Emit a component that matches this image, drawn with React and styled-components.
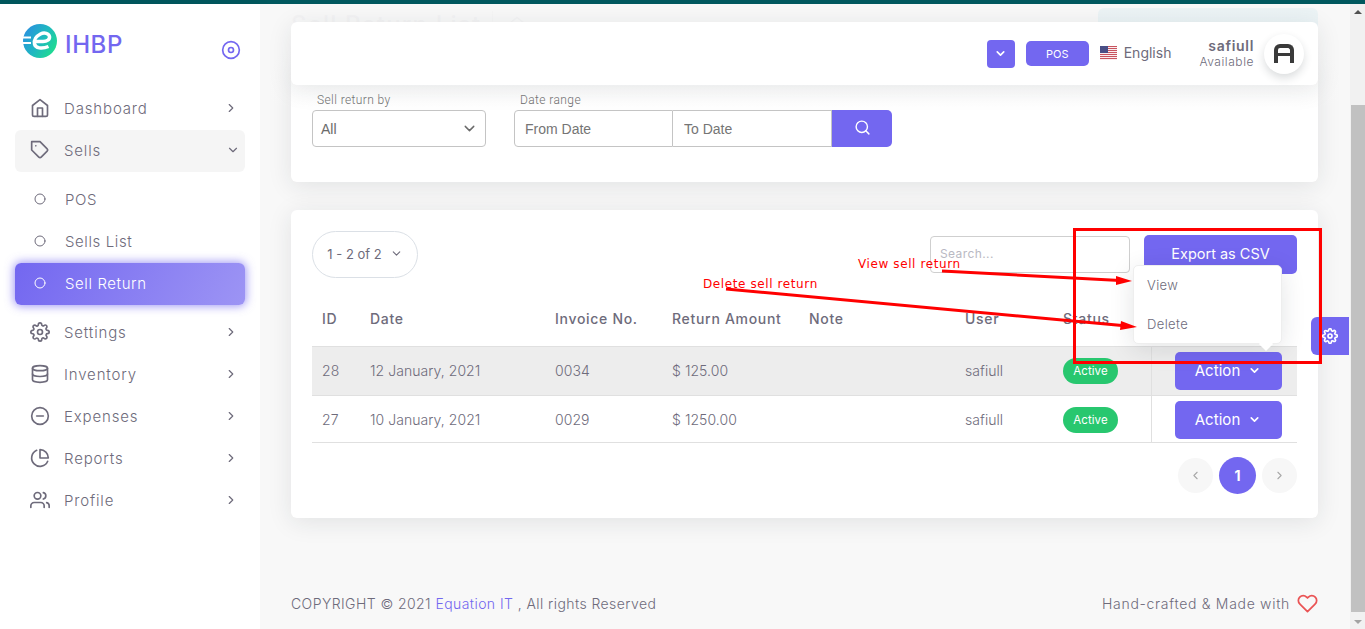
import React from 'react';
import styled, { createGlobalStyle } from 'styled-components';
import {
  FiHome, FiTag, FiSettings, FiDatabase, FiMinusCircle, FiPieChart, FiUsers,
  FiChevronRight, FiChevronDown, FiChevronLeft, FiDisc, FiSearch, FiHeart, FiCircle,
} from 'react-icons/fi';

const purple = '#7367f0';
const text = '#6e6b7b';

const GlobalStyle = createGlobalStyle`
  html, body { margin: 0; height: 100%; overflow: hidden; }
  body { font-family: Inter, "Open Sans", sans-serif; color: ${text}; background: #f8f8f8; }
  * { box-sizing: border-box; }
`;

const Page = styled.div`
  position: relative;
  height: 629px;
  display: flex;
  flex-direction: column;
`;

const TopBar = styled.div`
  height: 4px;
  flex: none;
  background: #00585e;
`;

const Body = styled.div`
  flex: 1;
  display: flex;
  min-height: 0;
`;

const Sidebar = styled.aside`
  width: 260px;
  flex: none;
  background: #fff;
  box-shadow: 0 0 15px rgba(34, 41, 47, 0.05);
`;

const Brand = styled.div`
  height: 84px;
  display: flex;
  align-items: flex-start;
  padding: 20px 19px 0 23px;
`;

const BrandName = styled.span`
  margin: 6px 0 0 8px;
  font-size: 24px;
  line-height: 29px;
  font-weight: 500;
  color: ${purple};
  letter-spacing: 0.6px;
`;

const Toggle = styled.span`
  margin: 16px 0 0 auto;
  color: ${purple};
  font-size: 20px;
  line-height: 0;
`;

const Menu = styled.nav`
  display: flex;
  flex-direction: column;
  padding: 0 15px;
`;

const SubMenu = styled.div`
  display: flex;
  flex-direction: column;
  padding: 7px 0;
`;

const MenuItem = styled.div`
  height: 42px;
  display: flex;
  align-items: center;
  padding: 0 7px 2px ${(p) => (p.$sub ? '19px' : '15px')};
  border-radius: 6px;
  font-size: 15px;
  font-weight: 300;
  letter-spacing: ${(p) => (p.$sub ? '0.6px' : '0.85px')};
  color: ${(p) => (p.$active ? '#fff' : text)};
  background: ${(p) => (p.$open ? '#f5f5f5' : p.$active ? 'linear-gradient(118deg, #7367f0, rgba(115, 103, 240, 0.7))' : 'transparent')};
  box-shadow: ${(p) => (p.$active ? '0 0 10px 1px rgba(115, 103, 240, 0.7)' : 'none')};
`;

const MenuIcon = styled.span`
  width: 34px;
  flex: none;
  font-size: 20px;
  line-height: 0;
`;

const SubIcon = styled.span`
  width: 31px;
  flex: none;
  font-size: 12px;
  line-height: 0;
`;

const MenuCaret = styled.span`
  margin-left: auto;
  margin-right: ${(p) => (p.$down ? '-2px' : '0')};
  font-size: 14px;
  line-height: 0;
`;

const Main = styled.main`
  position: relative;
  flex: 1;
  min-width: 0;
  display: flex;
  flex-direction: column;
  padding: 0 32px 0 31px;
  background: #f8f8f8;
`;

const TitleRow = styled.div`
  height: 56px;
  flex: none;
  display: flex;
  align-items: flex-start;
`;

const PageTitle = styled.h2`
  margin: 7px 0 0;
  width: 202px;
  height: 32px;
  border-right: 1px solid #ddd;
  font-size: 24px;
  line-height: 28px;
  font-weight: 500;
  letter-spacing: 1.2px;
  color: #c4c2cc;
`;

const Crumb = styled.span`
  margin: 12px 0 0 15px;
  color: #c4c2cc;
  font-size: 18px;
  line-height: 0;
`;

const AddButton = styled.div`
  width: 220px;
  height: 34px;
  margin: 4px 0 0 auto;
  border-radius: 6px;
  background: #76c6da;
`;

const NavFade = styled.div`
  position: absolute;
  top: 0;
  left: 0;
  right: 0;
  height: 104px;
  background: linear-gradient(180deg, rgba(248, 248, 248, 0.9) 44%, rgba(248, 248, 248, 0.43) 73%, rgba(248, 248, 248, 0));
  pointer-events: none;
`;

const Navbar = styled.header`
  position: absolute;
  top: 18px;
  left: 31px;
  right: 32px;
  height: 63px;
  display: flex;
  align-items: center;
  justify-content: flex-end;
  padding-right: 14px;
  background: #fff;
  border-radius: 6px;
  box-shadow: 0 4px 24px rgba(34, 41, 47, 0.1);
`;

const NavChevron = styled.div`
  width: 28px;
  height: 28px;
  display: flex;
  align-items: center;
  justify-content: center;
  border-radius: 4px;
  background: ${purple};
  color: #fff;
`;

const PosButton = styled.div`
  width: 63px;
  height: 25px;
  margin: 0 11px;
  display: flex;
  align-items: center;
  justify-content: center;
  border-radius: 5px;
  background: ${purple};
  color: #fff;
  font-size: 11px;
`;

const Lang = styled.div`
  display: flex;
  align-items: center;
  gap: 7px;
  padding-bottom: 2px;
  font-size: 14px;
`;

const UserBox = styled.div`
  margin: -1px 10px 0 28px;
  text-align: right;
`;

const UserName = styled.div`
  margin-bottom: 2px;
  font-size: 14px;
  line-height: 15px;
  font-weight: 600;
  letter-spacing: 0.7px;
`;

const UserState = styled.div`
  font-size: 12px;
  line-height: 14px;
  font-weight: 300;
  letter-spacing: 0.55px;
`;

const Avatar = styled.div`
  width: 40px;
  height: 40px;
  display: flex;
  align-items: center;
  justify-content: center;
  border-radius: 50%;
  background: #fff;
  box-shadow: 0 4px 8px rgba(34, 41, 47, 0.16);
`;

const AvatarMark = styled.div`
  position: relative;
  width: 20px;
  height: 19px;
  border: 4px solid #3a3a3a;
  border-bottom: 0;
  border-radius: 6px 6px 0 0;
  &::after {
    content: '';
    position: absolute;
    left: 0;
    right: 0;
    top: 5px;
    height: 3px;
    background: #3a3a3a;
  }
`;

const Card = styled.section`
  flex: none;
  background: #fff;
  border-radius: 6px;
  box-shadow: 0 4px 24px rgba(34, 41, 47, 0.1);
`;

const FilterCard = styled(Card)`
  height: 122px;
  padding: 32px 21px 0;
  display: flex;
  gap: 28px;
`;

const Field = styled.div`
  display: flex;
  flex-direction: column;
`;

const FieldLabel = styled.label`
  height: 18px;
  padding-left: ${(p) => p.$pad || '5px'};
  font-family: Roboto, sans-serif;
  font-size: 12px;
  line-height: 16px;
  font-weight: 300;
  letter-spacing: 0.4px;
  color: #5e5e5e;
`;

const SelectBox = styled.div`
  width: 174px;
  height: 37px;
  display: flex;
  align-items: center;
  justify-content: space-between;
  padding: 0 7px 0 8px;
  border: 1px solid #c4c4c4;
  border-radius: 4px;
  font-family: "Liberation Sans", sans-serif;
  font-size: 14px;
  font-weight: 400;
  color: #6a6a6a;
`;

const RangeGroup = styled.div`
  display: flex;
  height: 37px;
`;

const DateInput = styled.input`
  width: ${(p) => p.$w};
  height: 37px;
  padding: 0 10px 0 ${(p) => (p.$first ? '10px' : '11px')};
  border: 1px solid #c4c4c4;
  border-left-width: ${(p) => (p.$first ? '1px' : '0')};
  border-radius: ${(p) => (p.$first ? '4px 0 0 4px' : '0')};
  font-family: "Liberation Sans", sans-serif;
  font-size: 14px;
  outline: none;
  &::placeholder { color: #757575; opacity: 1; }
`;

const SearchBtn = styled.div`
  width: 60px;
  display: flex;
  align-items: center;
  justify-content: center;
  padding-bottom: 2px;
  border-radius: 0 5px 5px 0;
  background: ${purple};
  color: #fff;
  font-size: 17px;
`;

const TableCard = styled(Card)`
  height: 308px;
  margin-top: 28px;
  padding: 21px 21px 0;
`;

const Toolbar = styled.div`
  height: 47px;
  display: flex;
  align-items: center;
`;

const PagePill = styled.div`
  width: 106px;
  height: 47px;
  display: flex;
  align-items: center;
  justify-content: center;
  gap: 8px;
  padding-bottom: 2px;
  border: 1px solid #dbe0e6;
  border-radius: 24px;
  font-size: 13px;
`;

const SearchInput = styled.input`
  width: 200px;
  height: 37px;
  margin-left: auto;
  padding: 0 9px 2px;
  border: 1px solid #cfcfcf;
  border-radius: 4px;
  font-family: Inter, sans-serif;
  font-size: 12px;
  letter-spacing: 0.4px;
  outline: none;
  &::placeholder { color: #b9b9c3; opacity: 1; }
`;

const ExportButton = styled.div`
  width: 153px;
  height: 39px;
  margin-left: 14px;
  display: flex;
  align-items: center;
  justify-content: center;
  padding-bottom: 2px;
  border-radius: 5px;
  background: ${purple};
  color: #fff;
  font-size: 14.5px;
`;

const Table = styled.table`
  width: 985px;
  margin-top: 12px;
  border-collapse: collapse;
  table-layout: fixed;
`;

const Th = styled.th`
  height: 56px;
  padding: 2px 10px 0;
  border-bottom: 1px solid #e0e0e0;
  text-align: left;
  font-size: 14px;
  font-weight: 500;
  letter-spacing: 0.7px;
  color: ${text};
`;

const Row = styled.tr`
  background: ${(p) => (p.$hover ? '#ededed' : 'transparent')};
`;

const Td = styled.td`
  height: ${(p) => p.$h};
  padding: ${(p) => p.$pt} 10px 0;
  border-bottom: 1px solid #e0e0e0;
  font-size: 14px;
  font-weight: 300;
  letter-spacing: 0.05px;
`;

const ActionCell = styled(Td)`
  border-left: 1px solid #e0e0e0;
  padding-left: 23px;
  padding-right: 15px;
`;

const Badge = styled.span`
  width: 55px;
  height: 26px;
  display: inline-flex;
  align-items: center;
  justify-content: center;
  border-radius: 13px;
  background: #28c76f;
  color: #fff;
  font-size: 11.5px;
  font-weight: 400;
  vertical-align: middle;
`;

const ActionButton = styled.div`
  width: 107px;
  height: 38px;
  display: flex;
  align-items: center;
  justify-content: center;
  gap: 8px;
  border-radius: 5px;
  background: ${purple};
  color: #fff;
  font-size: 15px;
  font-weight: 400;
`;

const Pager = styled.div`
  margin-top: 14px;
  display: flex;
  align-items: center;
  justify-content: flex-end;
  gap: 6px;
`;

const PageArrow = styled.div`
  width: 35px;
  height: 35px;
  display: flex;
  align-items: center;
  justify-content: center;
  border-radius: 50%;
  background: #f7f7f7;
  color: #a8a8a8;
  font-size: 13px;
`;

const PageCurrent = styled.div`
  width: 37px;
  height: 37px;
  display: flex;
  align-items: center;
  justify-content: center;
  border-radius: 50%;
  background: ${purple};
  color: #fff;
  font-size: 14px;
  font-weight: 700;
`;

const Footer = styled.footer`
  margin-top: auto;
  height: 37px;
  display: flex;
  align-items: flex-start;
  justify-content: space-between;
  font-size: 14px;
  font-weight: 300;
  line-height: 24px;
  letter-spacing: 0.43px;
`;

const FooterLink = styled.span`
  color: ${purple};
`;

const FooterNote = styled.span`
  letter-spacing: 0.7px;
`;

const HeartWrap = styled.span`
  display: inline-flex;
  vertical-align: -5px;
  margin-left: 7px;
  color: #ea5455;
  font-size: 21px;
`;

const Scrollbar = styled.div`
  position: relative;
  width: 15px;
  flex: none;
  background: #f1f1f1;
`;

const ScrollThumb = styled.div`
  position: absolute;
  top: 101px;
  left: 1px;
  right: 0;
  height: 507px;
  background: #c1c1c1;
`;

const ScrollArrow = styled.div`
  position: absolute;
  left: 4px;
  width: 0;
  height: 0;
  border-left: 4px solid transparent;
  border-right: 4px solid transparent;
  ${(p) => (p.$down ? 'bottom: 5px; border-top: 4px solid #a3a3a3;' : 'top: 6px; border-bottom: 4px solid #505050;')}
`;

const SettingsTab = styled.div`
  position: absolute;
  top: 317px;
  left: 1311px;
  width: 38px;
  height: 38px;
  display: flex;
  align-items: center;
  justify-content: center;
  border-radius: 6px 0 0 6px;
  background: ${purple};
  color: #fff;
  font-size: 15px;
`;

const ActionMenu = styled.div`
  position: absolute;
  top: 265px;
  left: 1133px;
  width: 149px;
  height: 79px;
  background: #fff;
  border: 1px solid #eee;
  border-radius: 5px;
  box-shadow: 0 5px 25px rgba(34, 41, 47, 0.12);
  &::after {
    content: '';
    position: absolute;
    right: 10px;
    bottom: -6px;
    width: 10px;
    height: 10px;
    background: #fff;
    transform: rotate(45deg);
  }
`;

const ActionMenuItem = styled.div`
  height: 39px;
  display: flex;
  align-items: center;
  padding: 0 0 2px 13px;
  font-size: 13px;
  font-weight: 300;
  letter-spacing: 0.4px;
`;

const MarkupBox = styled.div`
  position: absolute;
  top: 228px;
  left: 1073px;
  width: 249px;
  height: 136px;
  border: 3px solid #f00;
  pointer-events: none;
`;

const MarkupLines = styled.svg`
  position: absolute;
  top: 0;
  left: 0;
  pointer-events: none;
`;

const MarkupLabel = styled.span`
  position: absolute;
  top: ${(p) => p.$top}px;
  left: ${(p) => p.$left}px;
  font-family: "DejaVu Sans", sans-serif;
  font-size: 12px;
  line-height: 16px;
  letter-spacing: 0.6px;
  color: #f00;
`;

const Logo = () => (
  <svg width="34" height="34" viewBox="0 0 34 34">
    <defs>
      <linearGradient id="logoGrad" x1="0" y1="0.2" x2="1" y2="0.8">
        <stop offset="0" stopColor="#2a8fe0" />
        <stop offset="0.5" stopColor="#1fb8c0" />
        <stop offset="1" stopColor="#1fe08a" />
      </linearGradient>
    </defs>
    <circle cx="17" cy="17" r="17" fill="url(#logoGrad)" />
    <path d="M0 13.5h8M0 19h8" stroke="#fff" strokeWidth="2" />
    <path d="M10 17.5h10c4 0 7-2 6.5-5-.6-3-5-4.5-9-2.5-4 2-7 6-6 10 1 4 7 5.5 14 2.5" fill="none" stroke="#fff" strokeWidth="3.5" />
  </svg>
);

const UsFlag = () => (
  <svg width="17" height="14" viewBox="0 0 17 14">
    <rect width="17" height="14" fill="#fff" />
    {[0, 2, 4, 6, 8, 10, 12].map((y) => (
      <rect key={y} y={y} width="17" height="1.1" fill="#c8545f" />
    ))}
    <rect width="8" height="7" fill="#4a4f86" />
  </svg>
);

const menuBefore = [
  { label: 'Dashboard', icon: FiHome },
];
const subItems = ['POS', 'Sells List', 'Sell Return'];
const menuAfter = [
  { label: 'Settings', icon: FiSettings },
  { label: 'Inventory', icon: FiDatabase },
  { label: 'Expenses', icon: FiMinusCircle },
  { label: 'Reports', icon: FiPieChart },
  { label: 'Profile', icon: FiUsers },
];

const rows = [
  { id: 28, date: '12 January, 2021', invoice: '0034', amount: '$ 125.00', h: '49px', pt: '0', hover: true },
  { id: 27, date: '10 January, 2021', invoice: '0029', amount: '$ 1250.00', h: '47px', pt: '2px' },
];

const NavLine = ({ item }) => (
  <MenuItem>
    <MenuIcon><item.icon /></MenuIcon>
    {item.label}
    <MenuCaret><FiChevronRight /></MenuCaret>
  </MenuItem>
);

const App = () => {
  return (
    <Page>
      <GlobalStyle />
      <TopBar />
      <Body>
        <Sidebar>
          <Brand>
            <Logo />
            <BrandName>IHBP</BrandName>
            <Toggle><FiDisc /></Toggle>
          </Brand>
          <Menu>
            {menuBefore.map((item) => <NavLine key={item.label} item={item} />)}
            <MenuItem $open>
              <MenuIcon><FiTag /></MenuIcon>
              Sells
              <MenuCaret $down><FiChevronDown /></MenuCaret>
            </MenuItem>
            <SubMenu>
              {subItems.map((label) => (
                <MenuItem key={label} $sub $active={label === 'Sell Return'}>
                  <SubIcon><FiCircle /></SubIcon>
                  {label}
                </MenuItem>
              ))}
            </SubMenu>
            {menuAfter.map((item) => <NavLine key={item.label} item={item} />)}
          </Menu>
        </Sidebar>

        <Main>
          <TitleRow>
            <PageTitle>Sell Return List</PageTitle>
            <Crumb><FiHome /></Crumb>
            <AddButton />
          </TitleRow>

          <FilterCard>
            <Field>
              <FieldLabel>Sell return by</FieldLabel>
              <SelectBox>All <FiChevronDown size={17} /></SelectBox>
            </Field>
            <Field>
              <FieldLabel $pad="6px">Date range</FieldLabel>
              <RangeGroup>
                <DateInput $first $w="159px" placeholder="From Date" readOnly />
                <DateInput $w="159px" placeholder="To Date" readOnly />
                <SearchBtn><FiSearch /></SearchBtn>
              </RangeGroup>
            </Field>
          </FilterCard>

          <TableCard>
            <Toolbar>
              <PagePill>1 - 2 of 2 <FiChevronDown size={13} /></PagePill>
              <SearchInput placeholder="Search..." readOnly />
              <ExportButton>Export as CSV</ExportButton>
            </Toolbar>
            <Table>
              <colgroup>
                {[48, 185, 117, 137, 156, 98, 98, 146].map((w, i) => <col key={i} width={w} />)}
              </colgroup>
              <thead>
                <tr>
                  <Th>ID</Th>
                  <Th>Date</Th>
                  <Th>Invoice No.</Th>
                  <Th>Return Amount</Th>
                  <Th>Note</Th>
                  <Th>User</Th>
                  <Th>Status</Th>
                  <Th />
                </tr>
              </thead>
              <tbody>
                {rows.map((r) => (
                  <Row key={r.id} $hover={r.hover}>
                    <Td $h={r.h} $pt={r.pt}>{r.id}</Td>
                    <Td $h={r.h} $pt={r.pt}>{r.date}</Td>
                    <Td $h={r.h} $pt={r.pt}>{r.invoice}</Td>
                    <Td $h={r.h} $pt={r.pt}>{r.amount}</Td>
                    <Td $h={r.h} $pt={r.pt} />
                    <Td $h={r.h} $pt={r.pt}>safiull</Td>
                    <Td $h={r.h} $pt={r.pt}><Badge>Active</Badge></Td>
                    <ActionCell $h={r.h} $pt={r.pt}>
                      <ActionButton>Action <FiChevronDown size={13} strokeWidth={3} /></ActionButton>
                    </ActionCell>
                  </Row>
                ))}
              </tbody>
            </Table>
            <Pager>
              <PageArrow><FiChevronLeft /></PageArrow>
              <PageCurrent>1</PageCurrent>
              <PageArrow><FiChevronRight /></PageArrow>
            </Pager>
          </TableCard>

          <Footer>
            <span>COPYRIGHT © 2021 <FooterLink>Equation IT</FooterLink> , All rights Reserved</span>
            <FooterNote>Hand-crafted &amp; Made with<HeartWrap><FiHeart /></HeartWrap></FooterNote>
          </Footer>

          <NavFade />
          <Navbar>
            <NavChevron><FiChevronDown size={13} strokeWidth={3} /></NavChevron>
            <PosButton>POS</PosButton>
            <Lang><UsFlag /> English</Lang>
            <UserBox>
              <UserName>safiull</UserName>
              <UserState>Available</UserState>
            </UserBox>
            <Avatar><AvatarMark /></Avatar>
          </Navbar>
        </Main>

        <Scrollbar>
          <ScrollArrow />
          <ScrollThumb />
          <ScrollArrow $down />
        </Scrollbar>
      </Body>

      <SettingsTab><FiSettings size={16} strokeWidth={2.5} /></SettingsTab>
      <ActionMenu>
        <ActionMenuItem>View</ActionMenuItem>
        <ActionMenuItem>Delete</ActionMenuItem>
      </ActionMenu>

      <MarkupLines width="1365" height="629" viewBox="0 0 1365 629">
        <path d="M942 271L1120 280.4M726 289L1122 325.6" stroke="#f00" strokeWidth="3" fill="none" />
        <path d="M1132 281L1116 276L1116 285ZM1137 327L1121 321L1120 330Z" fill="#f00" />
      </MarkupLines>
      <MarkupBox />
      <MarkupLabel $top={256} $left={858}>View sell return</MarkupLabel>
      <MarkupLabel $top={276} $left={703}>Delete sell return</MarkupLabel>
    </Page>
  );
};

export default App;
